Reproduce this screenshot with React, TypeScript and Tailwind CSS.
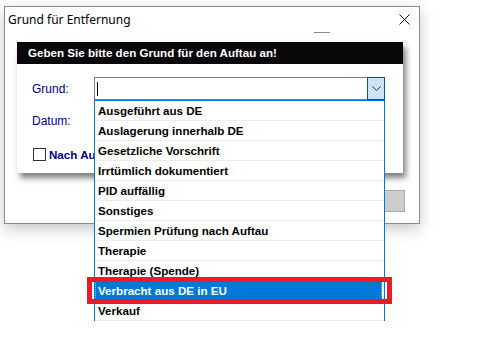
const items = [
    "Ausgeführt aus DE",
    "Auslagerung innerhalb DE",
    "Gesetzliche Vorschrift",
    "Irrtümlich dokumentiert",
    "PID auffällig",
    "Sonstiges",
    "Spermien Prüfung nach Auftau",
    "Therapie",
    "Therapie (Spende)",
    "Verbracht aus DE in EU",
    "Verkauf",
];

const selected = "Verbracht aus DE in EU";

const App = () => {
    return (
        <div className="w-[494px] h-[360px] bg-white overflow-hidden font-['Liberation_Sans',Arial,sans-serif]">
            <div className="pl-[4px] pt-[6px]">
                {/* outer window */}
                <div className="w-[416px] h-[218px] border border-[#8a8a8a] bg-white shadow-[0_5px_14px_rgba(0,0,0,0.22)] flex flex-col">
                    <div className="h-[25px] flex items-center justify-between pl-[3px] pr-[9px]">
                        <span className="text-[12px] text-black font-['Noto_Sans',sans-serif] leading-none">Grund für Entfernung</span>
                        <svg width="11" height="11" viewBox="0 0 11 11">
                            <path d="M0.5 0.5 L10.5 10.5 M10.5 0.5 L0.5 10.5" stroke="#111" strokeWidth="1" />
                        </svg>
                    </div>
                    <div className="h-[1px] w-[16px] ml-[309px] bg-[#8a8a8a]" />

                    {/* inner dialog */}
                    <div className="mt-[9px] ml-[12px] w-[386px] h-[131px] bg-white shadow-[3px_5px_6px_rgba(0,0,0,0.5)] flex flex-col">
                        <div className="h-[22px] bg-[#0a070a] text-white font-bold text-[11.6px] pl-[11px] flex items-center">
                            Geben Sie bitte den Grund für den Auftau an!
                        </div>
                        <div className="pl-[15px] flex flex-col">
                            <div className="mt-[13px] h-[23px] flex items-center">
                                <span className="w-[62px] text-[12px] text-[#000080]">Grund:</span>
                                <div className="relative w-[291px] h-[23px] border border-[#7a7a7a] bg-white flex">
                                    <div className="flex-1 flex items-center pl-[2px]">
                                        <div className="w-[1px] h-[14px] bg-black" />
                                    </div>
                                    <div className="w-[18px] h-[23px] -mt-[1px] -mr-[1px] border border-[#005499] bg-[#cce4f7] flex items-center justify-center">
                                        <svg width="9" height="5" viewBox="0 0 9 5">
                                            <path d="M0.5 0.5 L4.5 4.5 L8.5 0.5" stroke="#333" strokeWidth="1" fill="none" />
                                        </svg>
                                    </div>

                                    {/* dropdown list */}
                                    <div className="absolute left-[-1px] top-[22px] w-[291px] border-x border-t border-[#0078d7] bg-white z-10">
                                        {items.map((item) => (
                                            <div key={item} className="relative h-[20px] border-b border-[#ececec] flex">
                                                {item === selected ? (
                                                    <>
                                                        <div className="flex-1 mr-[2px] bg-[#0078d7] border border-dotted border-[#f0b040] text-white font-bold text-[11.6px] pl-[2px] flex items-center">
                                                            {item}
                                                        </div>
                                                        <div className="absolute -left-[8px] -right-[8px] -top-[4px] -bottom-[4px] border-[5px] border-[#ed1c24]" />
                                                    </>
                                                ) : (
                                                    <div className="flex-1 text-black font-bold text-[11.6px] pl-[3px] flex items-center">
                                                        {item}
                                                    </div>
                                                )}
                                            </div>
                                        ))}
                                    </div>
                                </div>
                            </div>
                            <div className="mt-[9px] h-[23px] flex items-center">
                                <span className="text-[12px] text-[#000080]">Datum:</span>
                            </div>
                            <div className="mt-[16px] h-[13px] flex items-center gap-[3px] pl-[1px]">
                                <div className="w-[13px] h-[13px] border border-[#333] bg-white" />
                                <span className="w-[45px] overflow-hidden text-[11.6px] font-bold text-[#000080] whitespace-nowrap">Nach Auftau</span>
                            </div>
                        </div>
                    </div>

                    <div className="mt-[17px] mr-[14px] self-end w-[75px] h-[22px] bg-[#cccccc] border border-[#adadad]" />
                </div>
            </div>
        </div>
    );
};

export default App;
